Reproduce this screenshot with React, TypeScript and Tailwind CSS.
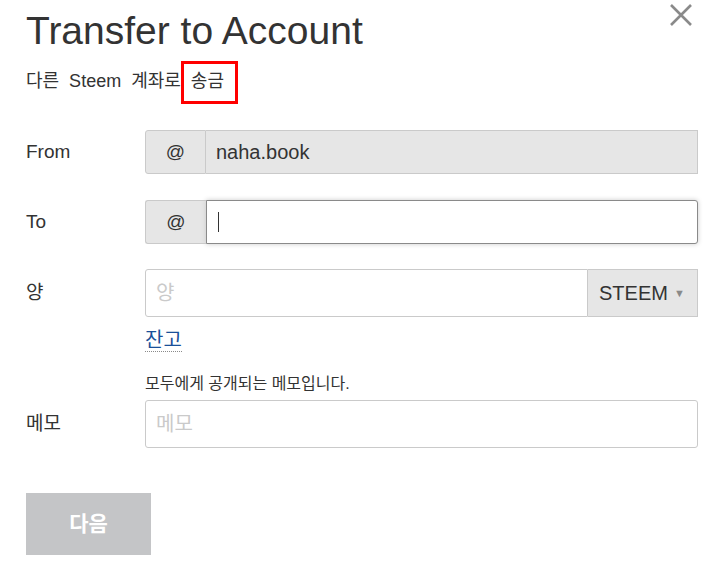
import { useState } from "react";

const font = { fontFamily: '"Liberation Sans", Arial, "Noto Sans CJK KR", sans-serif' };

const App = () => {
  const [to, setTo] = useState("");
  const [amount, setAmount] = useState("");
  const [memo, setMemo] = useState("");

  return (
    <div className="relative w-[714px] h-[583px] bg-white text-[#333]" style={font}>
      <button className="absolute right-[20px] top-[2px] text-[#8a8a8a]" aria-label="close">
        <svg width="26" height="26" viewBox="0 0 26 26">
          <path d="M3 3 L23 23 M23 3 L3 23" stroke="#8a8a8a" strokeWidth="2.6" />
        </svg>
      </button>

      <div className="pl-[26px] pr-[16px] pt-[9px]">
        <h1 className="text-[39px] leading-[44px] font-normal text-[#333]">Transfer to Account</h1>
        <p className="mt-[16px] text-[18px] leading-[24px] text-[#333] [word-spacing:5px]">
          다른 Steem 계좌로 <span className="relative">송금<span className="absolute -left-[10px] -top-[10px] w-[57px] h-[43px] border-[3px] border-[#ff0000]" /></span>
        </p>

        <div className="mt-[37px] flex items-center h-[44px]">
          <label className="w-[119px] text-[19px]">From</label>
          <div className="flex flex-1 h-full">
            <span className="w-[61px] flex items-center justify-center bg-[#e6e6e6] border border-[#cacaca] rounded-l-[3px] text-[19px]">@</span>
            <input
              disabled
              value="naha.book"
              className="flex-1 bg-[#e6e6e6] border border-l-0 border-[#cacaca] px-[10px] text-[20px] text-[#333]"
            />
          </div>
        </div>

        <div className="mt-[26px] flex items-center h-[44px]">
          <label className="w-[119px] text-[19px]">To</label>
          <div className="flex flex-1 h-full">
            <span className="w-[61px] flex items-center justify-center bg-[#e6e6e6] border border-r-0 border-[#cacaca] rounded-l-[3px] text-[19px]">@</span>
            <div className="flex-1 flex items-center bg-white border border-[#8a8a8a] rounded-r-[3px] shadow-[0_0_5px_#cacaca] px-[11px]">
              <span className="w-[1px] h-[20px] bg-[#333]" />
              <input
                value={to}
                onChange={(e) => setTo(e.target.value)}
                className="flex-1 outline-none text-[20px] bg-transparent"
              />
            </div>
          </div>
        </div>

        <div className="mt-[25px] flex items-center h-[48px]">
          <label className="w-[119px] text-[19px]">양</label>
          <div className="flex flex-1 h-full">
            <input
              placeholder="양"
              value={amount}
              onChange={(e) => setAmount(e.target.value)}
              className="flex-1 border border-[#cacaca] rounded-l-[3px] px-[10px] text-[20px] placeholder:text-[#cacaca] outline-none"
            />
            <div className="w-[110px] flex items-center justify-between bg-[#e6e6e6] border border-l-0 border-[#cacaca] pl-[11px] pr-[12px] text-[20px]">
              <span>STEEM</span>
              <span className="text-[11px] text-[#8a8a8a]">▼</span>
            </div>
          </div>
        </div>

        <div className="ml-[119px] mt-[11px]">
          <a className="text-[20px] text-[#1a5099] border-b border-dotted border-[#8a8a8a] leading-[24px]">잔고</a>
        </div>

        <p className="ml-[119px] mt-[20px] text-[16px] leading-[20px]">모두에게 공개되는 메모입니다.</p>

        <div className="mt-[6px] flex items-center h-[48px]">
          <label className="w-[119px] text-[19px]">메모</label>
          <input
            placeholder="메모"
            value={memo}
            onChange={(e) => setMemo(e.target.value)}
            className="flex-1 h-full border border-[#cacaca] rounded-[3px] px-[10px] text-[20px] placeholder:text-[#cacaca] outline-none"
          />
        </div>

        <button
          disabled
          className="mt-[45px] w-[125px] h-[62px] bg-[#c4c5c7] text-white text-[21px] font-bold"
        >
          다음
        </button>
      </div>
    </div>
  );
};

export default App;
